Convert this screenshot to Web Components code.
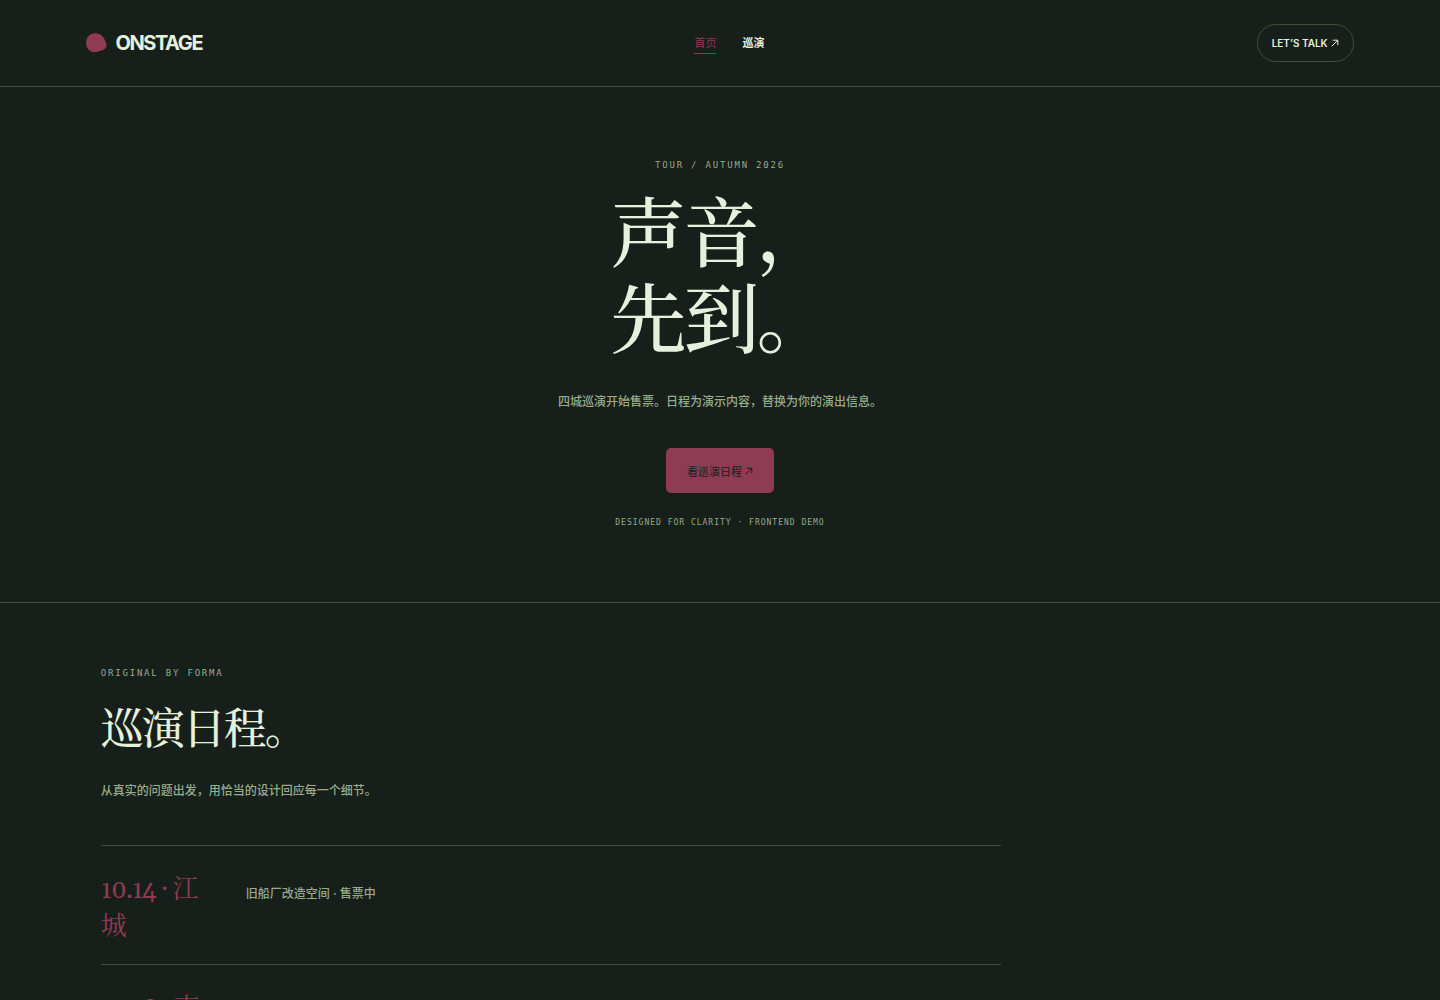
<!DOCTYPE html>
<html lang="zh-CN">
<head>
<meta charset="utf-8">
<meta name="viewport" content="width=device-width, initial-scale=1">
<title>ONSTAGE</title>
<style>
  :root {
    --bg: #161f1a;
    --ink: #e6f0dc;
    --muted: #9aab8c;
    --line: #414d38;
    --accent: #8f3b53;
    --sans: Inter, "Noto Sans CJK SC", sans-serif;
    --serif: Georgia, Gelasio, "Noto Serif CJK SC", "Noto Serif SC", "Songti SC", serif;
    --mono: "DejaVu Sans Mono", monospace;
  }
  body {
    margin: 0;
    background: var(--bg);
    color: var(--ink);
    font-family: var(--sans);
    font-size: 12px;
  }
</style>
</head>
<body>
<stage-header>
  <stage-link href="#home" current>首页</stage-link>
  <stage-link href="#tour">巡演</stage-link>
</stage-header>
<main>
  <stage-hero>
    <span slot="kicker">TOUR / AUTUMN 2026</span>
    <span slot="title">声音，<br>先到。</span>
    <span slot="lead">四城巡演开始售票。日程为演示内容，替换为你的演出信息。</span>
    <span slot="action">看巡演日程</span>
    <span slot="note">DESIGNED FOR CLARITY · FRONTEND DEMO</span>
  </stage-hero>
  <tour-section id="tour">
    <span slot="kicker">ORIGINAL BY FORMA</span>
    <span slot="title">巡演日程。</span>
    <span slot="lead">从真实的问题出发，用恰当的设计回应每一个细节。</span>
    <tour-date when="10.14 · 江城">旧船厂改造空间 · 售票中</tour-date>
    <tour-date when="10.18 · 南城">售票中</tour-date>
  </tour-section>
</main>

<script>
const arrow = `<svg width="8" height="8" viewBox="0 0 8 8" fill="none" stroke="currentColor" aria-hidden="true"><path d="M.8 7.200 6.500 1.500M1.800 1.200h5v5"/></svg>`

/**
 * Creates a template element from a string of markup.
 */
function createTemplate (html) {
  const template = document.createElement('template')
  template.innerHTML = html
  return template
}

/**
 * Base class that clones a template into an open shadow root.
 */
class StageElement extends HTMLElement {
  constructor () {
    super()
    this.attachShadow({ mode: 'open' }).appendChild(this.constructor.template.content.cloneNode(true))
  }
}

customElements.define('stage-header', class extends StageElement {
  static template = createTemplate(`
    <style>
    :host {
      display: block;
      border-bottom: 1px solid var(--line);
    }
    header {
      display: flex;
      justify-content: space-between;
      align-items: center;
      padding: 24px 6%;
    }
    a {
      color: inherit;
      text-decoration: none;
    }
    .brand {
      display: flex;
      align-items: center;
      gap: 8px;
      font-size: 20px;
      font-weight: 700;
      letter-spacing: -.07em;
    }
    nav {
      display: flex;
      gap: 26px;
    }
    .talk {
      display: flex;
      align-items: center;
      gap: 3px;
      padding: 0 14px;
      border: 1px solid var(--line);
      border-radius: 20px;
      font-size: 10px;
      font-weight: 600;
      line-height: 36px;
    }
    </style>
    <header>
      <a class="brand" href="#home">
        <svg width="21" height="20" viewBox="0 0 21 20" aria-hidden="true"><path fill="var(--accent)" d="M9 .3C15 .1 18 4 20.2 10.2C21.6 15 19 16.5 14 18C9 20 5 19.5 2 16C-.5 12.5-.5 7.500 1.5 4.3C3.3 1.5 6 .4 9 .3Z"/></svg>
        <span>ONSTAGE</span>
      </a>
      <nav><slot></slot></nav>
      <a class="talk" href="#talk">LET’S TALK ${arrow}</a>
    </header>
  `)
})

customElements.define('stage-link', class extends StageElement {
  static template = createTemplate(`
    <style>
    :host {
      display: block;
    }
    a {
      display: block;
      padding: 2px 0;
      border-bottom: 1px solid transparent;
      color: inherit;
      font-size: 11px;
      font-weight: 600;
      line-height: 16px;
      text-decoration: none;
    }
    :host([current]) a {
      border-bottom-color: var(--accent);
      color: var(--accent);
      font-weight: 400;
    }
    </style>
    <a><slot></slot></a>
  `)

  connectedCallback () {
    const link = this.shadowRoot.querySelector('a')
    link.href = this.getAttribute('href')
    if (this.hasAttribute('current')) {
      link.setAttribute('aria-current', 'page')
    }
  }
})

customElements.define('stage-hero', class extends StageElement {
  static template = createTemplate(`
    <style>
    :host {
      display: block;
      border-bottom: 1px solid var(--line);
    }
    section {
      display: flex;
      flex-direction: column;
      align-items: center;
      padding: 72px 6%;
    }
    p, h1 {
      margin: 0;
    }
    .kicker, .note {
      color: var(--muted);
      font-family: var(--mono);
    }
    .kicker {
      font-size: 9px;
      line-height: 12px;
      letter-spacing: .2em;
    }
    h1 {
      margin-top: 25px;
      font-family: var(--serif);
      font-size: 76px;
      font-weight: 500;
      line-height: 86px;
      letter-spacing: -.04em;
    }
    .lead {
      margin-top: 22px;
      color: var(--muted);
      font-weight: 500;
      line-height: 24px;
    }
    a {
      display: flex;
      align-items: center;
      gap: 3px;
      height: 45px;
      margin-top: 34px;
      padding: 0 21px;
      border-radius: 5px;
      background: var(--accent);
      color: var(--bg);
      font-size: 11px;
      text-decoration: none;
    }
    .note {
      margin-top: 23px;
      font-size: 8px;
      line-height: 14px;
      letter-spacing: 1px;
    }
    </style>
    <section>
      <p class="kicker"><slot name="kicker"></slot></p>
      <h1><slot name="title"></slot></h1>
      <p class="lead"><slot name="lead"></slot></p>
      <a href="#tour"><slot name="action"></slot>${arrow}</a>
      <p class="note"><slot name="note"></slot></p>
    </section>
  `)
})

customElements.define('tour-section', class extends StageElement {
  static template = createTemplate(`
    <style>
    :host {
      display: block;
      padding: 64px 7%;
    }
    p, h2 {
      margin: 0;
    }
    .kicker {
      color: var(--muted);
      font-family: var(--mono);
      font-size: 9px;
      line-height: 12px;
      letter-spacing: .2em;
    }
    h2 {
      margin-top: 25px;
      font-family: var(--serif);
      font-size: 43px;
      font-weight: 500;
      line-height: 56px;
      letter-spacing: -2px;
    }
    .lead {
      margin-top: 19px;
      color: var(--muted);
      font-weight: 500;
      line-height: 24px;
    }
    .dates {
      max-width: 900px;
      margin-top: 42px;
      border-top: 1px solid var(--line);
    }
    </style>
    <p class="kicker"><slot name="kicker"></slot></p>
    <h2><slot name="title"></slot></h2>
    <p class="lead"><slot name="lead"></slot></p>
    <div class="dates"><slot></slot></div>
  `)
})

customElements.define('tour-date', class extends StageElement {
  static template = createTemplate(`
    <style>
    :host {
      display: grid;
      grid-template-columns: 120px 1fr;
      align-items: baseline;
      gap: 25px;
      padding: 26px 0 18px;
      border-bottom: 1px solid var(--line);
    }
    h3, p {
      margin: 0;
    }
    h3 {
      color: var(--accent);
      font-family: var(--serif);
      font-size: 26px;
      font-weight: 400;
      line-height: 37px;
      letter-spacing: -1px;
    }
    p {
      color: var(--muted);
      font-weight: 500;
      line-height: 24px;
    }
    </style>
    <h3></h3>
    <p><slot></slot></p>
  `)

  connectedCallback () {
    this.shadowRoot.querySelector('h3').textContent = this.getAttribute('when')
  }
})
</script>
</body>
</html>
